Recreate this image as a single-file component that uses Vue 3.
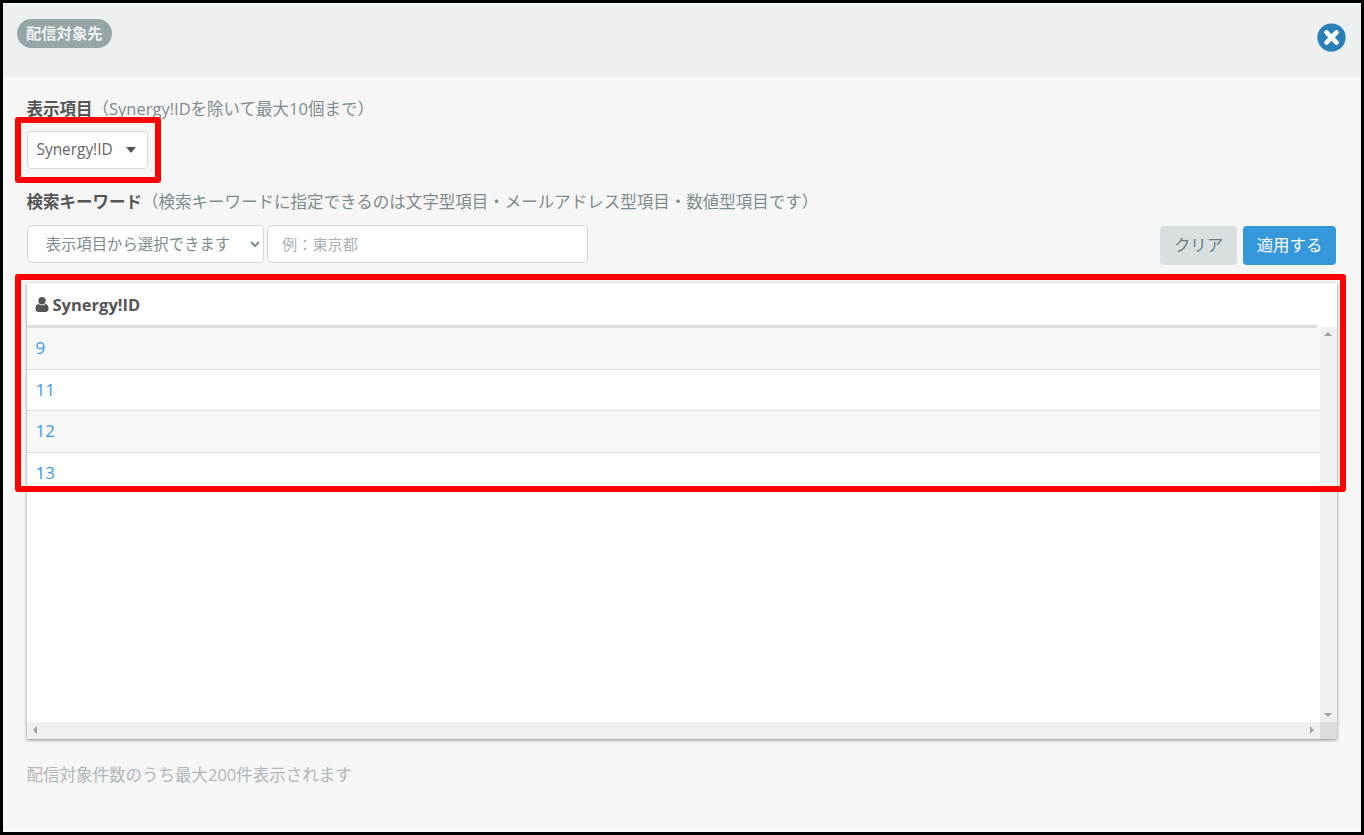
<script setup>
const rows = ['9', '11', '12', '13']
</script>

<template>
  <div class="screen">
    <header class="head">
      <span class="badge">配信対象先</span>
      <svg class="close" viewBox="0 0 30 30" aria-label="閉じる">
        <circle cx="15" cy="15" r="14.6" fill="#2980b9" />
        <path d="M9.8 9.800 20.200 20.200M20.200 9.800 9.800 20.200" stroke="#fff" stroke-width="4.8" stroke-linecap="round" fill="none" />
      </svg>
    </header>

    <main class="body">
      <p class="label first"><b>表示項目</b><span class="note">（Synergy!IDを除いて最大10個まで）</span></p>
      <div class="dropdown-wrap">
        <button class="dropdown">Synergy!ID<i class="caret"></i></button>
        <div class="frame frame-a"></div>
      </div>

      <p class="label second"><b>検索キーワード</b><span class="note">（検索キーワードに指定できるのは文字型項目・メールアドレス型項目・数値型項目です）</span></p>
      <div class="search">
        <select class="select">
          <option>表示項目から選択できます</option>
        </select>
        <input class="input" placeholder="例：東京都" />
        <div class="actions">
          <button class="btn clear">クリア</button>
          <button class="btn apply">適用する</button>
        </div>
      </div>

      <section class="table">
        <div class="main">
          <div class="content">
            <div class="th">
              <svg class="user" viewBox="0 0 14 16">
                <circle cx="7" cy="4" r="3.9" fill="#555" />
                <path d="M3.2 7.4C4.2 8.3 5.5 8.8 7 8.8s2.8-.5 3.800-1.400C12.900 7.500 14 9.600 14 12.600 14 14.700 12.800 16 11 16H3C1.200 16 0 14.700 0 12.600 0 9.600 1.100 7.500 3.200 7.400Z" fill="#555" />
              </svg>
              Synergy!ID
            </div>
            <div class="rows">
              <div v-for="r in rows" :key="r" class="row"><a class="link">{{ r }}</a></div>
            </div>
          </div>
          <div class="vbar">
            <i class="arrow up"></i>
            <i class="arrow down"></i>
          </div>
        </div>
        <div class="hbar">
          <div class="htrack">
            <i class="arrow left"></i>
            <i class="arrow right"></i>
          </div>
          <div class="corner"></div>
        </div>
        <div class="frame frame-b"></div>
      </section>

      <p class="foot">配信対象件数のうち最大200件表示されます</p>
    </main>
  </div>
</template>

<style>
html, body { margin: 0; padding: 0; }
</style>

<style scoped>
* { box-sizing: border-box; }
.screen {
  width: 1364px;
  height: 835px;
  border: 3px solid #000;
  background: #f6f6f6;
  display: flex;
  flex-direction: column;
  font-family: "Open Sans", "Noto Sans CJK JP", sans-serif;
  font-size: 16.5px;
  color: #555;
  overflow: hidden;
  box-shadow: inset 0 -1px 0 #fff;
}
.head {
  height: 74px;
  flex: none;
  background: #ecf0f1;
  border-top: 1px solid #fff;
  padding: 15px 15.500px 0 14px;
  display: flex;
  justify-content: space-between;
  align-items: flex-start;
}
.badge {
  height: 29px;
  padding: 0 9px;
  line-height: 28px;
  border-radius: 15px;
  background: #95a5a6;
  color: #ecf0f1;
  font-size: 15.300px;
  font-weight: 700;
}
.close { width: 29px; height: 29px; margin-top: 4px; display: block; }
.body { flex: 1; padding: 0 24px 0 23.500px; }
.label { margin: 0; line-height: 25px; }
.label b { font-weight: 700; color: #555; }
.note { color: #7f8c8d; }
.first { margin-top: 19px; }
.second { margin-top: 20px; }
.dropdown-wrap { position: relative; width: 121.500px; margin-top: 10px; }
.dropdown {
  width: 121.500px;
  height: 38px;
  padding: 0 0 1px 9px;
  display: flex;
  align-items: center;
  background: #fff;
  border: 1px solid #d5d9da;
  border-radius: 4px;
  font: inherit;
  font-size: 15.400px;
  color: #666;
}
.caret {
  margin-left: 13px;
  border: 5px solid transparent;
  border-top: 6px solid #555;
  border-bottom: 0;
}
.frame {
  position: absolute;
  border: 6px solid #f00;
  border-radius: 3px;
  pointer-events: none;
}
.frame-a { left: -11.500px; top: -14px; width: 146px; height: 66px; }
.frame-b { left: -11.500px; top: -9px; width: 1331px; height: 218px; }
.search { display: flex; margin-top: 11px; height: 38px; }
.select {
  width: 237.500px;
  height: 38px;
  padding: 0 4px 0 14px;
  background: #fff;
  border: 1px solid #d5d9da;
  border-radius: 4px;
  font: inherit;
  font-size: 15.400px;
  color: #7f8c8d;
}
.input {
  width: 321px;
  height: 38px;
  margin-left: 3px;
  padding: 0 14px;
  background: #fff;
  border: 1px solid #d5d9da;
  border-radius: 4px;
  font: inherit;
  font-size: 15.200px;
  outline: none;
}
.input::placeholder { color: #aab2b3; }
.actions { margin-left: auto; margin-right: 1px; display: flex; gap: 6px; padding-top: 1px; }
.btn {
  height: 39px;
  padding: 0 0 3px;
  border: 0;
  border-radius: 4px;
  font: inherit;
  font-size: 16.400px;
}
.clear { width: 77px; background: #d9dfe1; color: #6f7c7d; }
.apply { width: 93px; background: #3498db; color: #fff; }
.table {
  position: relative;
  height: 456px;
  margin-top: 20px;
  background: #fff;
  display: flex;
  flex-direction: column;
  box-shadow: 0 1px 3px rgba(0, 0, 0, .45);
}
.main { flex: 1; display: flex; min-height: 0; }
.content { flex: 1; min-width: 0; }
.vbar { width: 17px; background: #f0f0f0; position: relative; margin-top: 44px; }
.th {
  height: 45px;
  padding: 0 0 3px 8.500px;
  display: flex;
  align-items: center;
  gap: 3.500px;
  font-weight: 700;
  color: #555;
  background: linear-gradient(#ddd, #ddd) left bottom / calc(100% - 3px) 3px no-repeat #fff;
}
.user { width: 14px; height: 15px; }
.row {
  height: 41.700px;
  padding: 7px 9px 0;
  line-height: 26px;
  font-size: 17px;
  border-bottom: 1px solid #ddd;
}
.row:nth-child(odd) { background: #f8f8f8; }
.row:last-child { border-bottom: 0; }
.link { color: #3e9ade; }
.hbar { height: 17px; display: flex; flex: none; }
.htrack { flex: 1; background: #f0f0f0; position: relative; }
.corner { width: 17px; background: #dcdcdc; }
.arrow { position: absolute; width: 0; height: 0; border: 4px solid transparent; }
.up { top: 5px; left: 4px; border-bottom: 4px solid #a3a3a3; border-top: 0; }
.down { bottom: 5px; left: 4px; border-top: 4px solid #a3a3a3; border-bottom: 0; }
.left { left: 6px; top: 4px; border-right: 4px solid #a3a3a3; border-left: 0; }
.right { right: 6px; top: 4px; border-left: 4px solid #a3a3a3; border-right: 0; }
.foot { margin: 24px 0 0; line-height: 24px; color: #b0b7b8; }
</style>
